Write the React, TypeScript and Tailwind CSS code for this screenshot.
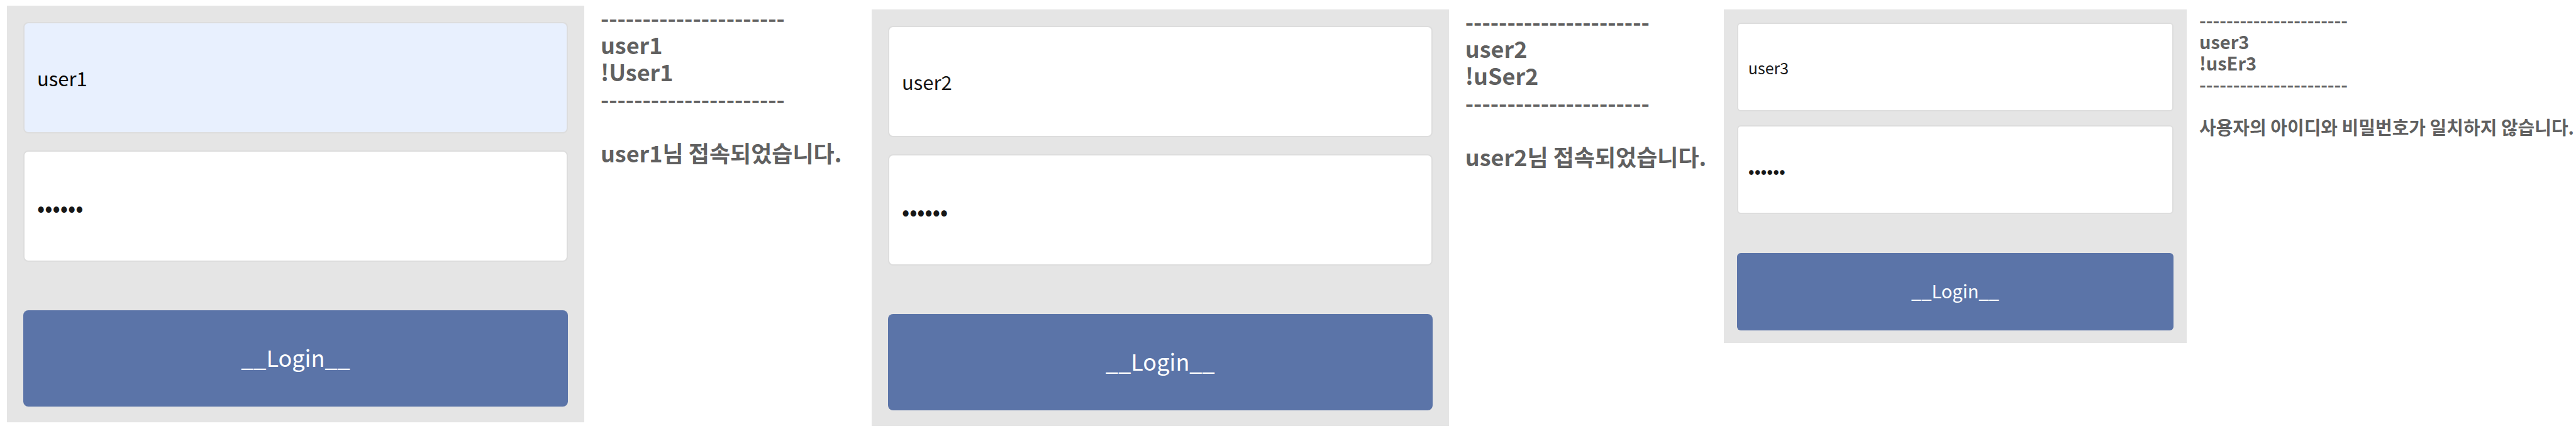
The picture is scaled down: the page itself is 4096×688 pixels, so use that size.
import { useState } from "react";
import { clsx } from "clsx";

type Attempt = {
  id: string;
  user: string;
  password: string;
  message: string;
  autofilled?: boolean;
  compact?: boolean;
};

const ATTEMPTS: Attempt[] = [
  { id: "first", user: "user1", password: "!User1", message: "user1님 접속되었습니다.", autofilled: true },
  { id: "second", user: "user2", password: "!uSer2", message: "user2님 접속되었습니다." },
  {
    id: "third",
    user: "user3",
    password: "!usEr3",
    message: "사용자의 아이디와 비밀번호가 일치하지 않습니다.",
    compact: true,
  },
];

const RULE = "-".repeat(22);

function LoginForm({ attempt }: { attempt: Attempt }) {
  const { compact, autofilled } = attempt;
  const [user, setUser] = useState(attempt.user);
  const [password, setPassword] = useState(attempt.password);

  const field = clsx(
    "block w-full border-2 border-[#dddddd] outline-none",
    compact ? "h-[141px] rounded-[6px] px-[16px]" : "h-[177px] rounded-[8px] px-[20px]",
  );

  return (
    <form
      onSubmit={(event) => event.preventDefault()}
      className={clsx(
        "flex min-w-0 flex-col bg-[#e5e5e5]",
        compact
          ? "mt-[15px] grow-[736] basis-0 gap-[22px] px-[21px] pt-[21px] pb-[20px]"
          : "grow-[918] basis-0 gap-[27px] px-[26px] pt-[26px] pb-[25px]",
        !compact && (autofilled ? "mt-[9px]" : "mt-[15px]"),
      )}
    >
      <input
        type="text"
        aria-label="아이디"
        value={user}
        onChange={(event) => setUser(event.target.value)}
        className={clsx(
          field,
          compact ? "text-[25px]" : "text-[31px]",
          autofilled ? "bg-[#e8f0fe] text-black" : "bg-white text-[#171717]",
        )}
      />
      <input
        type="password"
        aria-label="비밀번호"
        value={password}
        onChange={(event) => setPassword(event.target.value)}
        className={clsx(field, "bg-white text-[#171717]", compact ? "text-[29px]" : "text-[36px]")}
      />
      <button
        type="submit"
        className={clsx(
          "w-full bg-[#5b74a8] text-white",
          compact
            ? "mt-[40px] h-[123px] rounded-[6px] pb-[4px] text-[29px]"
            : "mt-[50px] h-[153px] rounded-[8px] pb-[6px] text-[36px]",
        )}
      >
        __Login__
      </button>
    </form>
  );
}

function Result({ attempt }: { attempt: Attempt }) {
  return (
    <section
      className={clsx(
        "shrink-0 font-bold whitespace-nowrap text-[#606060]",
        attempt.compact
          ? "w-[619px] pt-[14px] pl-[20px] text-[29px] leading-[34px]"
          : "pl-[26px] text-[36px] leading-[43px]",
        !attempt.compact && (attempt.autofilled ? "w-[457px] pt-[6px]" : "w-[437px] pt-[12px]"),
      )}
    >
      <p>{RULE}</p>
      <p>{attempt.user}</p>
      <p>{attempt.password}</p>
      <p>{RULE}</p>
      <br />
      <p>{attempt.message}</p>
    </section>
  );
}

export default function App() {
  return (
    <main className="flex min-h-screen items-start bg-white pl-[11px] font-['Noto_Sans_CJK_KR',sans-serif]">
      {ATTEMPTS.map((attempt) => (
        <div key={attempt.id} className="contents">
          <LoginForm attempt={attempt} />
          <Result attempt={attempt} />
        </div>
      ))}
    </main>
  );
}
